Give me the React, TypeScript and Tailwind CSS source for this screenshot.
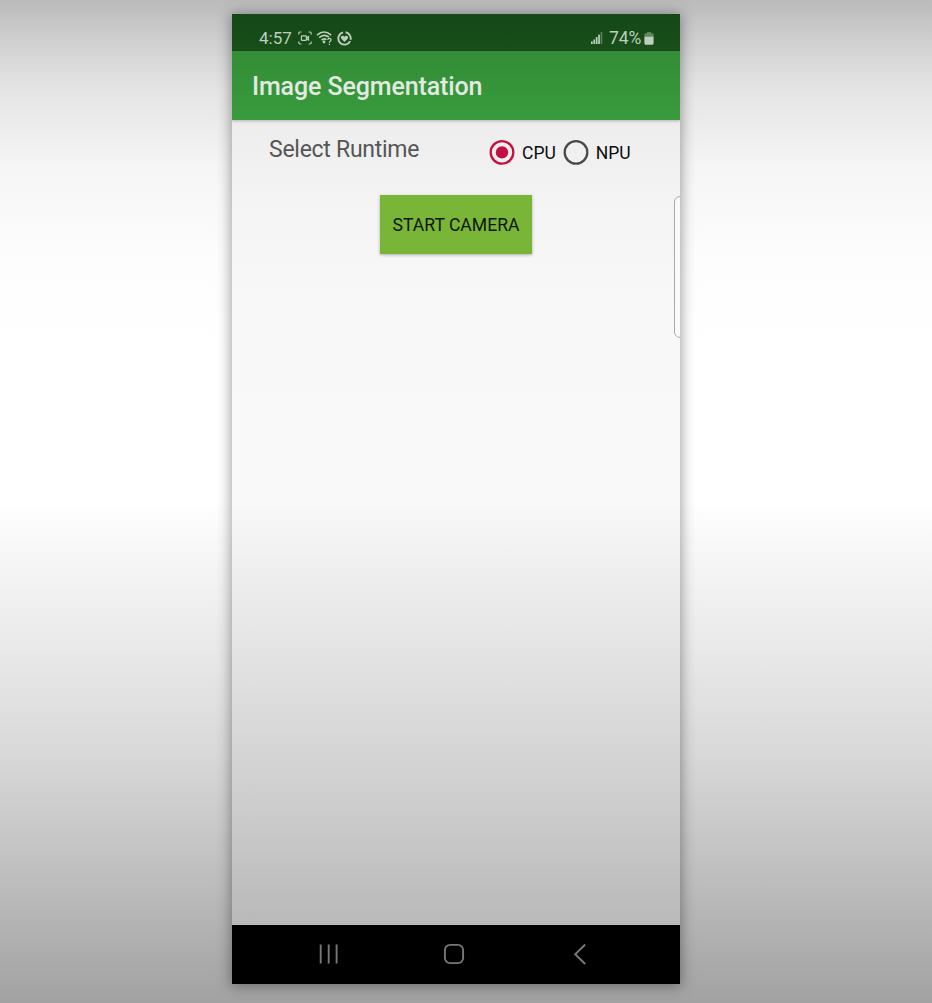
import React from "react";

function StatusBar() {
  return (
    <div className="flex h-[37px] shrink-0 items-center bg-linear-to-b from-[#154817] to-[#174e19] pt-[11px] pr-[26px] pl-[27px] text-[#bccfbc]">
      <span className="w-[39px] text-[17px] leading-none whitespace-nowrap">4:57</span>
      <svg className="h-[14px] w-[14px]" viewBox="0 0 14 14" fill="none" stroke="currentColor" strokeWidth="1.2">
        <path d="M.8 3.6V2.2Q.8 1 2 1h1.4M10.6 1H12q1.2 0 1.2 1.2v1.4M13.2 10.4v1.4q0 1.2-1.2 1.2h-1.4M3.4 13H2q-1.2 0-1.2-1.2v-1.4" />
        <rect x="3.4" y="4.9" width="5" height="4.4" rx=".6" />
        <path d="M8.6 6.7l1.9-1.2v3.4L8.6 7.9" />
      </svg>
      <svg className="ml-[4px] h-[16px] w-[17px]" viewBox="0 0 17 16" fill="none" stroke="currentColor" strokeWidth="1.6">
        <path d="M1 5.2Q8 -1.2 15.2 5.2M3.2 7.7Q8 3.2 13 7.2M5.6 10.1Q8 7.8 10.4 9.6" />
        <circle cx="8" cy="12" r="1.4" fill="currentColor" stroke="none" />
        <path strokeWidth="1.3" d="M11.7 9.8q.2-1.5 1.7-1.5 1.6 0 1.6 1.4 0 .9-.9 1.5-.7.4-.7 1.5M13.4 13.8v1.3" />
      </svg>
      <svg className="ml-[4px] h-[15px] w-[15px]" viewBox="0 0 15 15" fill="none" stroke="currentColor" strokeWidth="1.9">
        <path d="M8.6 1.3a6.2 6.2 0 0 1 5 7.4M13.1 10.2A6.2 6.2 0 1 1 6.1 1.4" />
        <path fill="currentColor" stroke="none" d="M7.5 11L4.5 7.9C3.3 6.5 4.1 4.7 5.6 4.7c.9 0 1.5.5 1.9 1.1.4-.6 1-1.1 1.9-1.1 1.5 0 2.3 1.8 1.1 3.2z" />
      </svg>
      <svg className="ml-auto h-[12px] w-[12px]" viewBox="0 0 12 12" fill="currentColor">
        <rect x="0" y="9.4" width="1.7" height="2.6" />
        <rect x="2.4" y="7.4" width="1.7" height="4.6" />
        <rect x="4.8" y="5" width="1.7" height="7" />
        <rect x="7.2" y="2.6" width="1.7" height="9.4" />
        <rect x="9.6" y="0" width="1.7" height="12" opacity=".4" />
      </svg>
      <span className="ml-[6px] w-[35px] pt-[2px] text-[17.5px] leading-none tracking-[-0.1px] whitespace-nowrap">74%</span>
      <svg className="h-[13px] w-[10px]" viewBox="0 0 10 13" fill="currentColor">
        <path opacity=".45" d="M3 0h4v1.2h1.2Q9.6 1.2 9.6 2.6V4.4H.4V2.6Q.4 1.2 1.8 1.2H3z" />
        <path d="M.4 4.4h9.2v6.8Q9.6 12.8 8 12.8H2Q.4 12.8.4 11.2z" />
      </svg>
    </div>
  );
}

function Radio({ label, checked }: { label: string; checked?: boolean }) {
  return (
    <label className="flex items-center gap-[7px]">
      <svg
        className={checked ? "h-[26px] w-[26px] text-[#c40f45]" : "h-[26px] w-[26px] text-[#4a4a4b]"}
        viewBox="0 0 26 26"
        fill="none"
      >
        <circle cx="13" cy="13.4" r="11.3" stroke="currentColor" strokeWidth="2.3" />
        {checked && <circle cx="13" cy="13.4" r="6.2" fill="currentColor" />}
      </svg>
      <span className="pt-[3px] text-[17.5px] leading-none text-[#0c0c0c]">{label}</span>
    </label>
  );
}

function NavigationBar() {
  return (
    <nav className="flex h-[59px] shrink-0 items-center bg-black pb-[2px] pl-[86px] text-[#777]">
      <svg className="h-[22px] w-[22px]" viewBox="0 0 22 22" stroke="currentColor" strokeWidth="1.9">
        <path d="M2.7 1.5v19M10.7 1.5v19M18.6 1.5v19" />
      </svg>
      <svg className="ml-[103px] h-[22px] w-[22px]" viewBox="0 0 22 22" fill="none" stroke="currentColor" strokeWidth="1.9">
        <rect x="1.9" y="1.9" width="18.2" height="18.2" rx="5.2" />
      </svg>
      <svg className="ml-[105px] h-[22px] w-[22px]" viewBox="0 0 22 22" fill="none" stroke="currentColor" strokeWidth="1.9">
        <path d="M15.2 1.5L5.2 11.2l10 9.8" />
      </svg>
    </nav>
  );
}

export default function App() {
  return (
    <div className="flex h-[1003px] w-[932px] justify-center overflow-hidden bg-[linear-gradient(180deg,#bababa_0px,#cdcdcd_35px,#e5e5e5_90px,#f6f6f6_170px,#fdfdfd_260px,#ffffff_350px,#ffffff_500px,#f5f5f5_565px,#e9e9e9_650px,#d9d9d9_750px,#c2c2c2_860px,#ababab_960px,#a2a2a2_1003px)] pr-[20px] pt-[14px] font-['Roboto',sans-serif]">
      <div className="relative flex h-[970px] w-[448px] flex-col overflow-hidden shadow-[0_1px_13px_1px_rgba(0,0,0,0.38)]">
        <StatusBar />
        <header className="z-10 flex h-[69px] shrink-0 items-center bg-linear-to-b from-[#338d36] to-[#389b3c] pt-[1px] pl-[20px] shadow-[0_1px_3px_rgba(0,0,0,0.25)]">
          <h1 className="text-[25px] leading-none font-medium tracking-[-0.12px] whitespace-nowrap text-[#e2eae2]">Image Segmentation</h1>
        </header>
        <main className="flex grow flex-col bg-[linear-gradient(180deg,#ededed_0px,#f4f4f4_80px,#f8f8f8_180px,#f9f9f9_380px,#eeeeee_455px,#e1e1e1_550px,#d0d0d0_665px,#b9b9b9_805px)]">
          <div className="flex h-[75px] items-start">
            <h2 className="mt-[18px] ml-[37px] w-[220px] text-[23px] leading-[24px] tracking-[-0.27px] whitespace-nowrap text-[#565656]">Select Runtime</h2>
            <div className="mt-[19px] flex gap-[7px]">
              <Radio label="CPU" checked />
              <Radio label="NPU" />
            </div>
          </div>
          <button className="ml-[148px] h-[59px] w-[152px] bg-[#79b637] pt-[2px] text-[17.6px] whitespace-nowrap text-[#101408] shadow-[0_1px_3px_rgba(0,0,0,0.3)]">START CAMERA</button>
        </main>
        <NavigationBar />
        <div className="absolute top-[182px] right-[-6px] h-[142px] w-[12px] rounded-[6px] border-[1.5px] border-[#aaa] bg-[#fafafa]" />
      </div>
    </div>
  );
}
